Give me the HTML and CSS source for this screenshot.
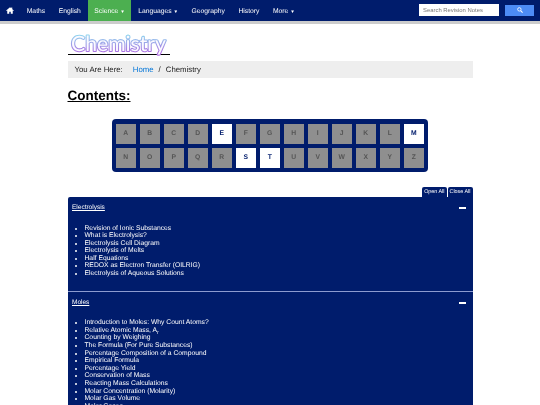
FILE: index.html
```html
<!DOCTYPE html>
<html lang="en">
<head>
<meta charset="utf-8">
<title>Chemistry</title>
<link rel="stylesheet" href="styles.css">
</head>
<body>
<nav class="nav">
  <a class="nav-item home" href="#"><svg viewBox="0 0 16 14" width="8" height="7"><path fill="#fff" d="M8 0.5 0.3 7.2l.9 1L2.5 7.1V13.5H6.5V9.5H9.5V13.5H13.5V7.1l1.3 1.1.9-1L12.5 4.4V1H10.5V2.6z"/></svg></a>
  <a class="nav-item" href="#">Maths</a>
  <a class="nav-item" href="#">English</a>
  <a class="nav-item active" href="#">Science <span class="caret">▼</span></a>
  <a class="nav-item" href="#">Languages <span class="caret">▼</span></a>
  <a class="nav-item" href="#">Geography</a>
  <a class="nav-item" href="#">History</a>
  <a class="nav-item" href="#">More <span class="caret">▼</span></a>
  <form class="search">
    <input class="search-input" type="text" placeholder="Search Revision Notes">
    <button class="search-btn" type="button"><svg viewBox="0 0 14 14" width="6" height="6"><circle cx="5.5" cy="5.5" r="4" fill="none" stroke="#fff" stroke-width="2"/><path d="M8.5 8.5 13 13" stroke="#fff" stroke-width="2.4"/></svg></button>
  </form>
</nav>
<main class="page">
  <h1 class="logo">
    <svg class="logo-art" viewBox="0 0 102 21" width="102" height="21">
      <defs><linearGradient id="logoGrad" gradientUnits="userSpaceOnUse" x1="0" y1="2" x2="0" y2="20"><stop offset="0" stop-color="#8fd4ee"/><stop offset="1" stop-color="#ae6ce2"/></linearGradient></defs>
      <text class="logo-text" x="3" y="18" textLength="95" lengthAdjust="spacingAndGlyphs" stroke="url(#logoGrad)">Chemistry</text>
    </svg>
  </h1>
  <div class="crumbs"><span class="crumb-label">You Are Here:</span><a href="#">Home</a><span class="crumb-sep">/</span><span>Chemistry</span></div>
  <h2 class="contents">Contents:</h2>
  <div class="alpha">
    <a class="off">A</a><a class="off">B</a><a class="off">C</a><a class="off">D</a><a class="on">E</a><a class="off">F</a><a class="off">G</a><a class="off">H</a><a class="off">I</a><a class="off">J</a><a class="off">K</a><a class="off">L</a><a class="on">M</a>
    <a class="off">N</a><a class="off">O</a><a class="off">P</a><a class="off">Q</a><a class="off">R</a><a class="on">S</a><a class="on">T</a><a class="off">U</a><a class="off">V</a><a class="off">W</a><a class="off">X</a><a class="off">Y</a><a class="off">Z</a>
  </div>
  <div class="tabs"><a>Open All</a><a>Close All</a></div>
  <section class="panel">
    <div class="panel-head"><a>Electrolysis</a><span class="minus"></span></div>
    <ul>
      <li>Revision of Ionic Substances</li>
      <li>What is Electrolysis?</li>
      <li>Electrolysis Cell Diagram</li>
      <li>Electrolysis of Melts</li>
      <li>Half Equations</li>
      <li>REDOX as Electron Transfer (OILRIG)</li>
      <li>Electrolysis of Aqueous Solutions</li>
    </ul>
  </section>
  <section class="panel second">
    <div class="panel-head"><a>Moles</a><span class="minus"></span></div>
    <ul>
      <li>Introduction to Moles: Why Count Atoms?</li>
      <li>Relative Atomic Mass, A<sub>r</sub></li>
      <li>Counting by Weighing</li>
      <li>The Formula (For Pure Substances)</li>
      <li>Percentage Composition of a Compound</li>
      <li>Empirical Formula</li>
      <li>Percentage Yield</li>
      <li>Conservation of Mass</li>
      <li>Reacting Mass Calculations</li>
      <li>Molar Concentration (Molarity)</li>
      <li>Molar Gas Volume</li>
      <li>Molar Gases</li>
    </ul>
  </section>
</main>
</body>
</html>
```
FILE: styles.css
```css
html, body { margin: 0; padding: 0; height: 405px; overflow: hidden; background: #fff; }
body { font-family: "Liberation Sans", Arial, sans-serif; color: #000; text-rendering: geometricPrecision; filter: blur(0.25px); }
a { text-decoration: none; }

.nav { display: flex; align-items: stretch; height: 21px; background: #001c6c; border-bottom: 3px solid #ccc; }
.nav-item { display: flex; align-items: center; padding: 1px 6.75px 0; font-size: 6.75px; color: #fff; white-space: pre; }
.home { padding: 0 6px; }
.caret { font-size: 4.6px; }
.active { background: #4caf50; }
.search { display: flex; align-items: center; margin-left: auto; gap: 6px; padding: 0 6px 1px 0; }
.search-input { box-sizing: border-box; width: 80px; height: 12px; padding: 0 4px; border: 0; background: #fff; font: 5.9px "Liberation Sans", Arial, sans-serif; }
.search-input::placeholder { color: #777; }
.search-btn { box-sizing: border-box; display: flex; align-items: center; justify-content: center; width: 29px; height: 11px; padding: 0; border: 0; background: #4d8cf5; }

.page { width: 405px; margin: 0 auto; }
.logo { margin: 9px 0 6px; height: 22px; box-sizing: border-box; width: 102px; border-bottom: 1px solid #000; }
.logo-art { display: block; overflow: visible; }
.logo-text { font: 400 21px "Lato", sans-serif; fill: #fbfaff; stroke-width: 2.2px; stroke-linejoin: round; paint-order: stroke; }
.crumbs { display: flex; align-items: center; height: 17px; padding-left: 7px; background: #eee; font-size: 7.8px; color: #222; }
.crumb-label { margin-right: 10px; }
.crumbs a { color: #0275d8; }
.crumb-sep { margin: 0 5px; }
.contents { margin: 9px 0 15px; font-size: 13.5px; line-height: 17px; font-weight: 700; text-decoration: underline; }

.alpha { box-sizing: border-box; display: grid; grid-template-columns: repeat(13, 20px); grid-auto-rows: 20px; gap: 4px; width: 316px; height: 53px; margin: 0 auto 15px; padding: 4.5px 3.75px; background: #001c6c; border-radius: 4px; }
.alpha a { display: flex; align-items: center; justify-content: center; font-size: 6.75px; font-weight: 700; }
.off { background: #8f8f8f; color: #555; }
.on { background: #fff; color: #001c6c; }

.tabs { display: flex; justify-content: flex-end; gap: 1px; height: 10px; }
.tabs a { display: flex; align-items: center; padding: 0 2px; background: #001c6c; color: #fff; font-size: 5.4px; border-radius: 2px 2px 0 0; }

.panel { background: #001c6c; color: #fff; font-size: 6.75px; line-height: 7.6px; border-radius: 2px 0 0 0; padding-bottom: 13px; }
.panel.second { border-top: 1px solid #8c9bd0; border-radius: 0; }
.panel-head { display: flex; justify-content: space-between; align-items: center; height: 22px; padding: 0 6.5px 0 4.5px; }
.panel-head a { text-decoration: underline; font-size: 6.5px; }
.minus { width: 7px; height: 2px; background: #fff; }
ul { margin: 0; padding: 5.5px 0 0 17px; }
sub { font-size: 5px; line-height: 0; }
```
